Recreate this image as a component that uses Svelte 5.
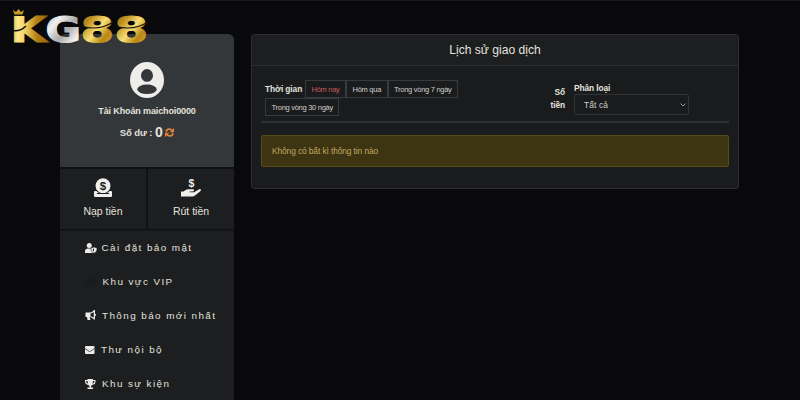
<script>
  const menu = [
    { icon: 'shield', label: 'Cài đặt bảo mật', gap: 4.5 },
    { icon: 'vip', label: 'Khu vực VIP', gap: 5.5 },
    { icon: 'horn', label: 'Thông báo mới nhất', gap: 5 },
    { icon: 'mail', label: 'Thư nội bộ', gap: 4 },
    { icon: 'cup', label: 'Khu sự kiện', gap: 5 }
  ];
  const ranges = ['Hôm nay', 'Hôm qua', 'Trong vòng 7 ngày', 'Trong vòng 30 ngày'];
  let active = $state(0);
</script>

<div class="page">
  <svg class="logo" viewBox="0 0 140 44" width="140" height="44" aria-label="KG88">
    <defs>
      <linearGradient id="gold" x1="0" y1="0" x2="1" y2="1">
        <stop offset="0" stop-color="#8d6814" />
        <stop offset=".25" stop-color="#b98a1c" />
        <stop offset=".5" stop-color="#f8df76" />
        <stop offset=".7" stop-color="#b98716" />
        <stop offset="1" stop-color="#e0b840" />
      </linearGradient>
      <linearGradient id="goldK" x1="0" y1="0" x2="1" y2="0">
        <stop offset="0" stop-color="#d9a93a" />
        <stop offset=".2" stop-color="#ffe98c" />
        <stop offset=".42" stop-color="#eccb58" />
        <stop offset=".7" stop-color="#b27d12" />
        <stop offset="1" stop-color="#94680f" />
      </linearGradient>
      <linearGradient id="silver" x1="0" y1="0" x2="1" y2="1">
        <stop offset="0" stop-color="#999" />
        <stop offset=".3" stop-color="#f1f1f1" />
        <stop offset=".55" stop-color="#aaa" />
        <stop offset=".8" stop-color="#f5f5f5" />
        <stop offset="1" stop-color="#aaa" />
      </linearGradient>
    </defs>
    <g class="letters">
      <text x="0.500" y="34.300" textLength="36" lengthAdjust="spacingAndGlyphs" fill="url(#goldK)" stroke="url(#goldK)">K</text>
      <text x="35.500" y="34.300" textLength="35.500" lengthAdjust="spacingAndGlyphs" fill="url(#silver)" stroke="url(#silver)">G</text>
      <text x="70.500" y="34.300" textLength="33.500" lengthAdjust="spacingAndGlyphs" fill="url(#gold)" stroke="url(#gold)">8</text>
      <text x="104.500" y="34.300" textLength="33.500" lengthAdjust="spacingAndGlyphs" fill="url(#gold)" stroke="url(#gold)">8</text>
    </g>
    <path d="M2 22.500Q10 24 16 18" fill="none" stroke="#0b0b0d" stroke-width="1.500" />
    <path d="M72 18.500Q90 23 103 14M106 18.500Q124 23 138 14" fill="none" stroke="#17150e" stroke-width="1.200" />
    <rect x="2" y="6.500" width="13" height="1.400" fill="#0b0b0d" />
    <path d="M4.500 6.500L3 2L6 4L8.500 1L11 4L14 2L12.500 6.500Z" fill="#c89925" />
  </svg>

  <aside>
    <div class="account">
      <svg class="avatar" viewBox="0 0 34 34" width="34" height="36" preserveAspectRatio="none">
        <circle cx="17" cy="17" r="17" fill="#eeede9" />
        <circle cx="17" cy="12.700" r="6" fill="#34373a" />
        <ellipse cx="17" cy="25.800" rx="9.700" ry="4.500" fill="#34373a" />
      </svg>
      <div class="name">Tài Khoản maichoi0000</div>
      <div class="balance">
        <span>Số dư :</span><b>0</b>
        <svg viewBox="0 0 16 16" width="9" height="9" fill="none" stroke="#e58238" stroke-width="3">
          <path d="M2 7C2.500 1 10 .5 13 5M14 9C13.500 15 6 15.500 3 11" />
          <path d="M16 0V7.500H8.500ZM0 16V8.500H7.500Z" fill="#e58238" stroke="none" />
        </svg>
      </div>
    </div>
    <div class="actions">
      <div class="action">
        <svg viewBox="0 0 18 20" width="18" height="20">
          <path d="M1 13H17Q18 13 18 14V18Q18 19 17 19H1Q0 19 0 18V14Q0 13 1 13Z" fill="#f0efeb" />
          <circle cx="9" cy="7.800" r="8.300" fill="#1c1e20" />
          <circle cx="9" cy="7.800" r="7.500" fill="#f0efeb" />
          <path d="M3 15.500H15" stroke="#1c1e20" stroke-width="1.200" />
          <text class="coin" x="9" y="11.800" text-anchor="middle" fill="#1c1e20">$</text>
        </svg>
        <span>Nạp tiền</span>
      </div>
      <div class="action">
        <svg viewBox="0 0 20 20" width="20" height="20" fill="#f0efeb">
          <text class="coin small" x="10.500" y="9" text-anchor="middle">$</text>
          <path d="M0 13.500H2.500L5 11.800Q6 11.300 7 11.300H12Q13.300 11.500 13 12.600Q12.800 13.500 11.500 13.600H8.500V14.300H13L17.800 11.400Q19.300 10.700 19.900 11.600Q20.200 12.400 19 13.400L14 17.400Q12.800 18.500 11.500 18.500H0Z" />
        </svg>
        <span>Rút tiền</span>
      </div>
    </div>
    <nav>
      {#each menu as item}
        <div class="item">
          <svg viewBox="0 0 24 20" width="12" height="10" fill="#ecebe7">
            {#if item.icon === 'shield'}
              <circle cx="8.500" cy="5" r="5" />
              <path d="M0 20V17Q0 11 6 11H11Q17 11 17 17V20Z" />
              <path d="M18 8L24 10V13Q24 18 18 20.500Q12 18 12 13V10Z" stroke="#1c1e20" stroke-width="1.200" />
              <path d="M18 11V17Q15.500 16 15.500 12Z" fill="#1c1e20" />
            {:else if item.icon === 'vip'}
              <path d="M2 5L7 9L12 3L17 9L22 5L20 17H4Z" fill="#181a1c" />
            {:else if item.icon === 'horn'}
              <path d="M1 7Q0 6 2 5H10Q14 5 18 0H20V7Q22 8 22 10Q22 12 20 12V19H18Q14 14 9 14L11 20H5L4 14H2Q0 14 1 12Z" />
              <path d="M11 7Q15 6.500 17.500 4V15.500Q15 13 11 12.500Z" fill="#1c1e20" />
            {:else if item.icon === 'mail'}
              <rect x="0" y="2" width="19" height="16" rx="2" />
              <path d="M0 7L8 12.500Q9.500 13.300 11 12.500L19 7" fill="none" stroke="#1c1e20" stroke-width="1.400" />
            {:else}
              <path d="M5 0H16V2H21V5Q21 11 14 12Q13 14 12 14V17H16V20H5V17H9V14Q8 14 7 12Q0 11 0 5V2H5ZM2 4Q2 8 6 9.500L5 4ZM16 4L15 9.500Q19 8 19 4Z" fill-rule="evenodd" />
            {/if}
          </svg>
          <span style:margin-left="{item.gap}px">{item.label}</span>
        </div>
      {/each}
    </nav>
  </aside>

  <main>
    <h1>Lịch sử giao dịch</h1>
    <div class="content">
      <div class="filters">
        <div class="time">
          <b>Thời gian</b>
          {#each ranges as range, i}
            <button class:active={active === i} onclick={() => (active = i)}>{range}</button>
          {/each}
        </div>
        <div class="amount">Số<br />tiền</div>
        <div class="type">
          <b>Phân loại</b>
          <div class="select">
            <span>Tất cả</span>
            <svg viewBox="0 0 6 4" width="6" height="4"><path d="M.6.6L3 3L5.400.6" fill="none" stroke="#bbb" stroke-width=".8" /></svg>
          </div>
        </div>
      </div>
      <div class="alert">Không có bất kì thông tin nào</div>
    </div>
  </main>
</div>

<style>
  :global(body) { background: #09090b; }
  .page {
    position: relative;
    box-sizing: border-box;
    display: flex;
    align-items: flex-start;
    gap: 17px;
    width: 800px;
    height: 400px;
    padding: 33px 0 0 60px;
    overflow: hidden;
    border-top: 1px solid #17181a;
    background: #09090b;
    color: #e4e2dd;
    font-family: "Liberation Sans", Arial, sans-serif;
  }
  .logo { position: absolute; left: 10px; top: 7px; overflow: visible; }
  .letters { font: bold 35.5px "DejaVu Sans", sans-serif; stroke-width: 1.2; }
  aside {
    width: 174px;
    height: 380px;
    border-radius: 6px 6px 0 0;
    background: #1c1e20;
    overflow: hidden;
  }
  .account {
    display: flex;
    flex-direction: column;
    align-items: center;
    box-sizing: border-box;
    height: 133px;
    padding-top: 28px;
    background: #34373a;
  }
  .avatar { display: block; }
  .name { margin-top: 7px; font-size: 9px; letter-spacing: -0.13px; line-height: 12px; font-weight: bold; white-space: nowrap; }
  .balance {
    display: flex;
    align-items: center;
    gap: 2.5px;
    height: 16px;
    margin-top: 7px;
    font-size: 9.5px;
    letter-spacing: -0.1px;
    font-weight: bold;
  }
  .balance b { font-size: 14px; }
  .actions {
    display: flex;
    gap: 2px;
    padding: 2px 0 1px;
    background: #101113;
  }
  .action {
    display: flex;
    flex: 1;
    flex-direction: column;
    align-items: center;
    box-sizing: border-box;
    height: 60px;
    padding-top: 9px;
    background: #1c1e20;
    font-size: 10.5px;
  }
  .action span { margin-top: 7px; line-height: 13px; }
  .coin { font: bold 11.5px "Liberation Sans", sans-serif; }
  .small { font-size: 10.5px; }
  nav { border-top: 1px solid #151719; margin-bottom: -1px; }
  .item {
    display: flex;
    align-items: center;
    height: 34.2px;
    padding-left: 25px;
    font-size: 9.9px;
    letter-spacing: 1.42px;
    white-space: nowrap;
  }
  .item:first-child { height: 33.2px; }
  .item svg { flex: none; overflow: visible; }
  main {
    box-sizing: border-box;
    width: 488px;
    height: 155px;
    border: 1px solid #2c2e30;
    border-radius: 3px;
    background: #191b1d;
  }
  h1 {
    box-sizing: border-box;
    height: 31px;
    margin: 0;
    border-bottom: 1px solid #2c2e30;
    background: #1c1e20;
    font-size: 12.1px;
    font-weight: normal;
    line-height: 30px;
    text-align: center;
  }
  .content { padding: 14px 9px 0; }
  .filters {
    display: flex;
    box-sizing: border-box;
    height: 43px;
    padding-left: 4px;
    border-bottom: 2px solid #2e3032;
    font-size: 8.4px;
    letter-spacing: -0.1px;
  }
  .time { display: flex; flex-wrap: wrap; align-content: flex-start; width: 225px; }
  .time b { width: 40px; line-height: 18px; white-space: nowrap; }
  button {
    box-sizing: border-box;
    height: 18px;
    margin: 0;
    padding: 0 5.5px;
    border: 1px solid #37393b;
    background: transparent;
    color: #d2cfca;
    font: 7.5px "Liberation Sans", Arial, sans-serif;
    letter-spacing: -0.28px;
    white-space: nowrap;
  }
  button.active { color: #c35d59; }
  .amount { width: 75px; padding-top: 6px; font-weight: bold; line-height: 13px; text-align: right; }
  .type { width: 115px; margin-left: 9px; }
  .type b { display: block; height: 14px; line-height: 17px; }
  .select {
    display: flex;
    align-items: center;
    justify-content: space-between;
    box-sizing: border-box;
    height: 21px;
    padding: 0 2px 0 9px;
    border: 1px solid #303234;
    border-radius: 2px;
    color: #d2cfca;
    font-size: 8.4px;
    letter-spacing: 0.15px;
  }
  .alert {
    box-sizing: border-box;
    height: 32px;
    margin-top: 12px;
    padding-left: 10px;
    border: 1px solid #574a1b;
    border-radius: 2px;
    background: #3d3511;
    color: #c2a764;
    font-size: 8.4px;
    letter-spacing: -0.1px;
    line-height: 30px;
  }
</style>
